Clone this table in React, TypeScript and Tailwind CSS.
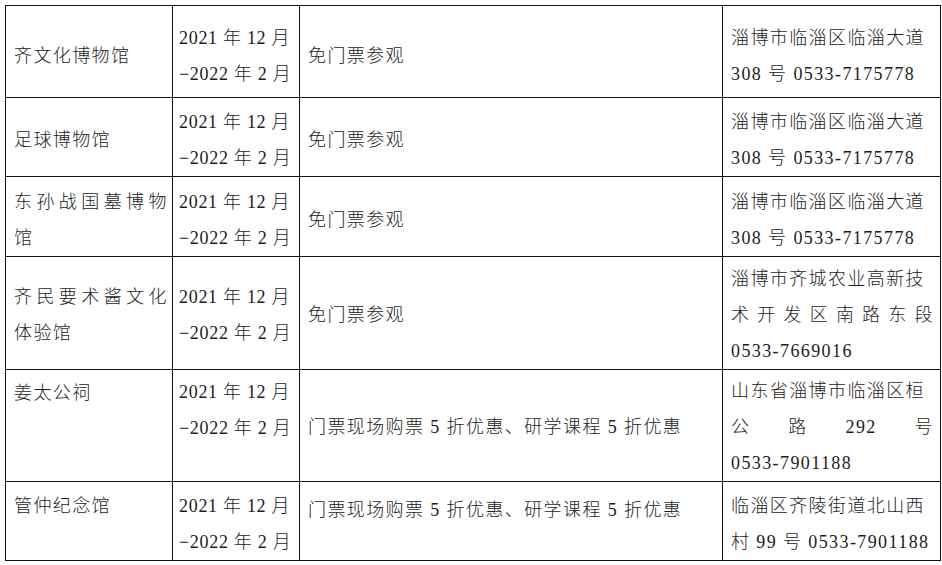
import React from "react"

type Line = string | string[]

// a line given as an array is spread across the full cell width
function Lines({ lines }: { lines: Line[] }) {
  return (
    <>
      {lines.map((l, i) =>
        Array.isArray(l) ? (
          <div key={i} className="flex justify-between">
            {l.map((p, j) => (
              <span key={j}>{p}</span>
            ))}
          </div>
        ) : (
          <div key={i} className="whitespace-nowrap">
            {l}
          </div>
        ),
      )}
    </>
  )
}

type Row = {
  h: string
  pad: string
  name: Line[]
  nameTop?: string
  dateTop?: string
  offerTop?: string
  offer: string
  addr: Line[]
}

const dates: Line[] = ["2021 年 12 月", "−2022 年 2 月"]
const addr1: Line[] = ["淄博市临淄区临淄大道", "308 号  0533-7175778"]
const free = "免门票参观"
const discount = "门票现场购票 5 折优惠、研学课程 5 折优惠"

const rows: Row[] = [
  { h: "h-[92px]", pad: "pt-[8px]", name: ["齐文化博物馆"], offer: free, addr: addr1 },
  { h: "h-[79px]", pad: "pt-[5px]", name: ["足球博物馆"], offer: free, addr: addr1 },
  { h: "h-[80px]", pad: "pt-[6px]", name: [["东", "孙", "战", "国", "墓", "博", "物"], "馆"], offer: free, addr: addr1 },
  {
    h: "h-[113px]",
    pad: "pt-[3px]",
    name: [["齐", "民", "要", "术", "酱", "文", "化"], "体验馆"],
    offer: free,
    addr: ["淄博市齐城农业高新技", ["术", "开", "发", "区", "南", "路", "东", "段"], "0533-7669016"],
  },
  {
    h: "h-[112px]",
    pad: "pt-[2px]",
    name: ["姜太公祠"],
    nameTop: "pt-[5px]",
    dateTop: "pt-[4px]",
    offer: discount,
    addr: ["山东省淄博市临淄区桓", ["公", "路", "292", "号"], "0533-7901188"],
  },
  {
    h: "h-[79px]",
    pad: "pt-[5px]",
    name: ["管仲纪念馆"],
    nameTop: "pt-[6px]",
    offerTop: "pt-[10px]",
    offer: discount,
    addr: ["临淄区齐陵街道北山西", "村 99 号 0533-7901188"],
  },
]

const cell = "border-[1.5px] border-[#111] pb-0"

export default function App() {
  return (
    <div
      className="w-[942px] h-[565px] overflow-hidden bg-white pt-[5px] pl-[5px] text-[18px] font-light leading-[36px] tracking-[1.4px] text-[#1c1c1c]"
      style={{ fontFamily: "'Liberation Serif', 'Noto Sans CJK SC', serif" }}
    >
      <table className="table-fixed border-collapse w-[935px]">
        <colgroup>
          <col className="w-[167px]" />
          <col className="w-[127px]" />
          <col className="w-[423px]" />
          <col className="w-[218px]" />
        </colgroup>
        <tbody>
          {rows.map((r, i) => (
            <tr key={i} className={r.h}>
              <td
                className={`${cell} pl-[8px] pr-[4px] ${
                  r.nameTop ? `align-top ${r.nameTop}` : `align-middle ${r.pad}`
                }`}
              >
                <Lines lines={r.name} />
              </td>
              <td
                className={`${cell} pl-[6px] pr-[2px] tracking-[0.7px] ${
                  r.dateTop ? `align-top ${r.dateTop}` : `align-middle ${r.pad}`
                }`}
              >
                <Lines lines={dates} />
              </td>
              <td
                className={`${cell} pl-[8px] ${
                  r.offerTop ? `align-top ${r.offerTop}` : `align-middle ${r.pad}`
                }`}
              >
                {r.offer}
              </td>
              <td className={`${cell} pl-[8px] pr-[6px] align-middle ${r.pad}`}>
                <Lines lines={r.addr} />
              </td>
            </tr>
          ))}
        </tbody>
      </table>
    </div>
  )
}
